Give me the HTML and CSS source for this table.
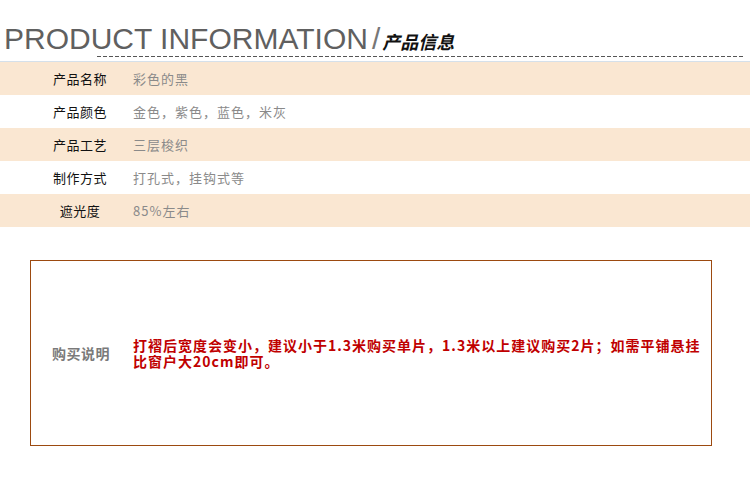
FILE: index.html
```html
<!DOCTYPE html>
<html lang="zh">
<head>
<meta charset="utf-8">
<title>Product Information</title>
<link rel="stylesheet" href="styles.css">
</head>
<body>
<header class="head">
  <div class="title"><span class="en">PRODUCT INFORMATION</span><span class="slash">/</span><span class="cn">产品信息</span></div>
  <div class="dash"></div>
  <div class="rule"></div>
</header>
<section class="table">
  <div class="row alt"><div class="k">产品名称</div><div class="v">彩色的黑</div></div>
  <div class="row"><div class="k">产品颜色</div><div class="v">金色，紫色，蓝色，米灰</div></div>
  <div class="row alt"><div class="k">产品工艺</div><div class="v">三层梭织</div></div>
  <div class="row"><div class="k">制作方式</div><div class="v">打孔式，挂钩式等</div></div>
  <div class="row alt"><div class="k">遮光度</div><div class="v">85%左右</div></div>
</section>
<section class="box">
  <div class="bk">购买说明</div>
  <div class="bv">打褶后宽度会变小，建议小于1.3米购买单片，1.3米以上建议购买2片；如需平铺悬挂比窗户大20cm即可。</div>
</section>
</body>
</html>
```

FILE: styles.css
```css
html, body {
  margin: 0;
  padding: 0;
  background: #fff;
}
body {
  width: 750px;
  font-family: "Noto Sans CJK SC", "Liberation Sans", sans-serif;
}
.head {
  display: flex;
  flex-direction: column;
}
.title {
  display: flex;
  align-items: baseline;
  padding: 21px 0 0 4px;
  height: 35px;
  line-height: 35px;
  white-space: nowrap;
}
.en {
  font-family: "Liberation Sans", Arial, sans-serif;
  font-size: 30px;
  color: #606060;
}
.slash {
  font-family: "Liberation Sans", Arial, sans-serif;
  font-size: 30px;
  color: #777;
  margin-left: 4px;
}
.cn {
  font-family: "Noto Sans CJK SC", sans-serif;
  font-size: 18px;
  font-weight: bold;
  font-style: italic;
  color: #111;
  margin-left: 2px;
}
.dash {
  margin-left: 97px;
  width: 648px;
  height: 1px;
  background: repeating-linear-gradient(to right, #555 0 4px, transparent 4px 6px);
}
.rule {
  margin-top: 4px;
  height: 1px;
  background: #d5e0ea;
}
.table {
  display: flex;
  flex-direction: column;
}
.row {
  display: flex;
  align-items: center;
  height: 33px;
  font-size: 13px;
}
.row.alt {
  background: #fae7d2;
}
.k {
  width: 100px;
  padding-left: 30px;
  text-align: center;
  color: #111;
  letter-spacing: 0.5px;
}
.v {
  margin-left: 3px;
  color: #8a8a8a;
  letter-spacing: 1px;
}
.box {
  margin: 33px 0 0 30px;
  width: 680px;
  height: 184px;
  border: 1px solid #9c4a10;
  display: flex;
  align-items: center;
}
.bk {
  width: 100px;
  text-align: center;
  font-size: 14px;
  font-weight: bold;
  color: #7a7a7a;
  letter-spacing: 0.5px;
}
.bv {
  margin-left: 2px;
  width: 574px;
  font-size: 14px;
  line-height: 16px;
  font-weight: bold;
  color: #c00000;
  letter-spacing: 1px;
}
```
